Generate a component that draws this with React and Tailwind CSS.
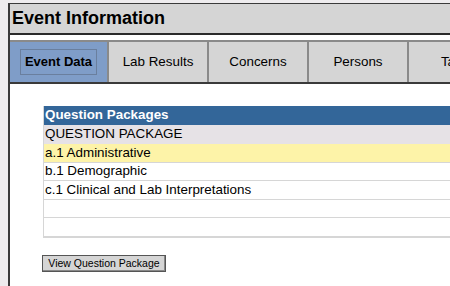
import React from 'react';

const tabs = ['Event Data', 'Lab Results', 'Concerns', 'Persons', 'Tasks'];

const rows = [
  { label: 'a.1 Administrative', bg: 'bg-[#fdf3a8]' },
  { label: 'b.1 Demographic', bg: 'bg-white' },
  { label: 'c.1 Clinical and Lab Interpretations', bg: 'bg-white' },
  { label: '', bg: 'bg-white' },
  { label: '', bg: 'bg-white' },
];

export default function App() {
  return (
    <div
      className="flex h-[286px] w-[450px] overflow-hidden bg-[#eeecee] pl-2 pt-[3px] text-[13.4px] text-black"
      style={{ fontFamily: '"Liberation Sans", Arial, sans-serif' }}
    >
      <div className="flex min-w-0 flex-1 flex-col border-l-2 border-t border-[#3a3a3a] bg-white">
        <div className="flex h-[31px] shrink-0 items-center border-b-2 border-[#2a2a2a] bg-[#d5d5d5] pl-[2px] text-[18px] font-bold">
          Event Information
        </div>

        <div className="mt-[5px] flex h-[44px] shrink-0 border-b-2 border-[#3a3a3a]">
          {tabs.map((t, i) => (
            <div
              key={t}
              className={
                'flex shrink-0 items-center justify-center border-r-2 border-t-2 border-[#8a8a8a] ' +
                (i === 0 ? 'w-[99px] bg-[#7f9dc8]' : 'w-[100px] bg-[#d5d5d5]')
              }
            >
              {i === 0 ? (
                <span className="border border-[#6a7f9e] px-[4px] py-[2px] text-[13px] font-bold">{t}</span>
              ) : (
                <span>{t}</span>
              )}
            </div>
          ))}
        </div>

        <div className="pl-[33px] pt-[22px]">
          <div className="w-[500px] border-b border-l border-[#d6d6d6]">
            <div className="flex h-[19px] items-center bg-[#336699] pl-px font-bold text-white">
              Question Packages
            </div>
            <div className="flex h-[19px] items-center bg-[#e6e2e6] pl-px">QUESTION PACKAGE</div>
            {rows.map((r, i) => (
              <div
                key={i}
                className={'flex h-[18.5px] items-center border-b border-[#d6d6d6] pl-px ' + r.bg}
              >
                {r.label}
              </div>
            ))}
          </div>

          <button className="-ml-px mt-[17px] h-[17px] w-[124px] border border-[#555] bg-[#d5d5d5] text-[10.5px] leading-none shadow-[inset_-1px_-1px_0_#888]">
            View Question Package
          </button>
        </div>
      </div>
    </div>
  );
}
